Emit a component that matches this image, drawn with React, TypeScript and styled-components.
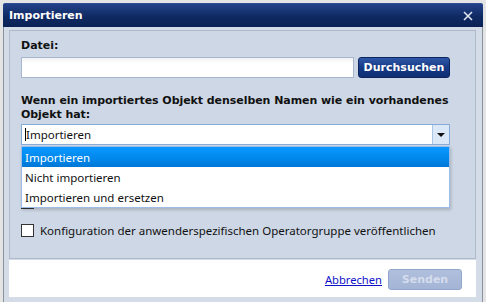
import React from "react";
import styled, { createGlobalStyle } from "styled-components";

const GlobalStyle = createGlobalStyle`
  html, body {
    margin: 0;
    padding: 0;
    background: #e4e4e4;
    overflow: hidden;
  }
  body {
    font-family: "DejaVu Sans", Verdana, sans-serif;
  }
`;

const Dialog = styled.div`
  margin: 3px 0 0 3px;
  width: 480px;
  display: flex;
  flex-direction: column;
`;

const TitleBar = styled.div`
  height: 24px;
  display: flex;
  align-items: center;
  justify-content: space-between;
  padding: 0 8px 0 6px;
  box-sizing: border-box;
  background: linear-gradient(#23418a, #0f2a62 55%, #0a2154);
  border-top: 1px solid #2d4d95;
  border-radius: 2px 2px 0 0;
`;

const Title = styled.span`
  color: #ffffff;
  font: bold 11px "DejaVu Sans", Verdana, sans-serif;
`;

const CloseButton = styled.button`
  width: 14px;
  height: 14px;
  padding: 0;
  border: 0;
  background: none;
  display: flex;
  align-items: center;
  justify-content: center;
  cursor: pointer;
`;

const Frame = styled.div`
  background: #d4dce8;
  border-left: 1px solid #8a929e;
  border-right: 1px solid #8a929e;
  padding: 3px 6px 5px 5px;
  display: flex;
  flex-direction: column;
`;

const Panel = styled.div`
  position: relative;
  height: 229px;
  box-sizing: border-box;
  background: #cdd7e5;
  border: 1px solid #aeb9c9;
  padding: 8px 25px 0 11px;
  display: flex;
  flex-direction: column;
`;

const Label = styled.div`
  font: bold 11px/14px "DejaVu Sans", Verdana, sans-serif;
  color: #111;
`;

const FileRow = styled.div`
  display: flex;
  gap: 4px;
  margin-top: 4px;
`;

const TextInput = styled.input`
  flex: 1;
  height: 21px;
  box-sizing: border-box;
  border: 1px solid #a7b6cc;
  background: linear-gradient(#f2f2f2, #ffffff 5px);
  outline: none;
`;

const PrimaryButton = styled.button`
  width: 92px;
  height: 21px;
  border: 1px solid #0c2560;
  border-radius: 3px;
  background: linear-gradient(#2f57a8, #163a85 50%, #0f2f72);
  color: #ffffff;
  font: bold 11px "DejaVu Sans", Verdana, sans-serif;
  padding: 0;
`;

const Question = styled(Label)`
  margin-top: 16px;
  letter-spacing: -0.06px;
  white-space: nowrap;
`;

const Select = styled.div`
  margin-top: 2px;
  height: 21px;
  box-sizing: border-box;
  border: 1px solid #86abd9;
  background: #fff;
  display: flex;
  align-items: stretch;
`;

const SelectValue = styled.div`
  flex: 1;
  display: flex;
  align-items: center;
  padding-left: 3px;
  font: 11.5px "Noto Sans", Tahoma, sans-serif;
  color: #111;
`;

const Caret = styled.span`
  width: 1px;
  height: 13px;
  background: #000;
`;

const ArrowBox = styled.div`
  width: 16px;
  background: #dbe8f7;
  border-left: 1px solid #a9c5e8;
  display: flex;
  align-items: center;
  justify-content: center;
`;

const Arrow = styled.span`
  width: 0;
  height: 0;
  border-left: 4px solid transparent;
  border-right: 4px solid transparent;
  border-top: 4px solid #111;
`;

const OptionList = styled.ul`
  position: absolute;
  left: 11px;
  top: 115px;
  width: 429px;
  margin: 0;
  padding: 0;
  list-style: none;
  box-sizing: border-box;
  background: #fff;
  border: 1px solid #9dbde6;
  box-shadow: 1px 2px 3px rgba(0, 0, 0, 0.18);
  z-index: 2;
`;

const Option = styled.li<{ $active?: boolean }>`
  height: 20px;
  display: flex;
  align-items: center;
  padding-left: 3px;
  font: 11.5px "Noto Sans", Tahoma, sans-serif;
  color: ${(p) => (p.$active ? "#ffffff" : "#111")};
  background: ${(p) => (p.$active ? "linear-gradient(#0a98ff, #0087ea 60%, #0077d6)" : "#fff")};
`;

const CheckRow = styled.label<{ $top: number }>`
  display: flex;
  align-items: center;
  gap: 6px;
  height: 13px;
  margin-top: ${(p) => p.$top}px;
  font: 11.5px/13px "Noto Sans", Tahoma, sans-serif;
  color: #111;
  white-space: nowrap;
`;

const Box = styled.span`
  width: 13px;
  height: 13px;
  box-sizing: border-box;
  border: 1px solid #333;
  background: #fff;
  flex-shrink: 0;
`;

const Footer = styled.div`
  height: 37px;
  background: #fff;
  display: flex;
  align-items: center;
  justify-content: flex-end;
  gap: 6px;
  padding-right: 14px;
  margin-top: 1px;
`;

const Link = styled.a`
  font: 11.2px "Noto Sans", Tahoma, sans-serif;
  color: #1010c8;
  text-decoration: underline;
  margin-top: 2px;
`;

const DisabledButton = styled.button`
  width: 74px;
  height: 21px;
  margin-top: 2px;
  border: 1px solid #93a6cb;
  border-radius: 3px;
  background: linear-gradient(#b0bfdc, #a3b4d5);
  color: #d5dded;
  font: bold 11px "DejaVu Sans", Verdana, sans-serif;
  padding: 0;
`;

export default function App() {
  return (
    <>
      <GlobalStyle />
      <Dialog>
        <TitleBar>
          <Title>Importieren</Title>
          <CloseButton aria-label="Schließen">
            <svg width="10" height="10" viewBox="0 0 10 10">
              <path d="M1 1 L9 9 M9 1 L1 9" stroke="#dfe4ee" strokeWidth="1.6" />
            </svg>
          </CloseButton>
        </TitleBar>
        <Frame>
          <Panel>
            <Label>Datei:</Label>
            <FileRow>
              <TextInput type="text" />
              <PrimaryButton>Durchsuchen</PrimaryButton>
            </FileRow>
            <Question>
              Wenn ein importiertes Objekt denselben Namen wie ein vorhandenes
              <br />
              Objekt hat:
            </Question>
            <Select>
              <SelectValue>
                <Caret />
                Importieren
              </SelectValue>
              <ArrowBox>
                <Arrow />
              </ArrowBox>
            </Select>
            <OptionList>
              <Option $active>Importieren</Option>
              <Option>Nicht importieren</Option>
              <Option>Importieren und ersetzen</Option>
            </OptionList>
            <CheckRow $top={51}>
              <Box />
            </CheckRow>
            <CheckRow $top={15}>
              <Box />
              Konfiguration der anwenderspezifischen Operatorgruppe veröffentlichen
            </CheckRow>
          </Panel>
          <Footer>
            <Link href="#">Abbrechen</Link>
            <DisabledButton disabled>Senden</DisabledButton>
          </Footer>
        </Frame>
      </Dialog>
    </>
  );
}
